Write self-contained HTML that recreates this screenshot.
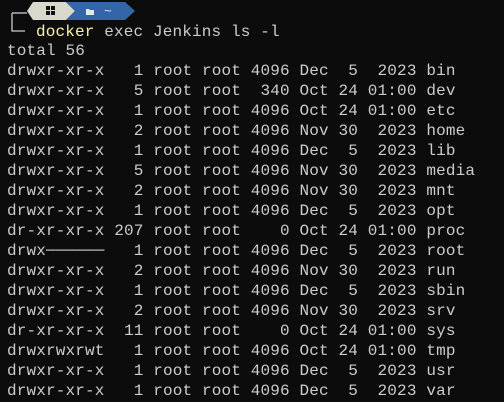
<html><head><style>
body{margin:0;width:504px;height:402px;background:#0c0c0c;overflow:hidden;font-family:"Liberation Mono",monospace;color:#cccccc}
pre{position:absolute;left:7px;top:41px;margin:0;font-size:16px;line-height:20px;font-family:"Liberation Mono",monospace;letter-spacing:0.15px}
.p{position:absolute;left:36px;top:23px;font-size:16px;letter-spacing:0.15px;white-space:pre}
</style></head><body>
<svg width="504" height="40" style="position:absolute;left:0;top:0">
<path d="M12 13 V31 H25" stroke="#cccccc" stroke-width="1.3" fill="none"/>
<path d="M12 13 H27" stroke="#cccccc" stroke-width="1.3"/>
<polygon points="27,11 33,2 66,2 75,11 66,20 33,20" fill="#d8d8cc"/>
<polygon points="66,2 125,2 135,11 125,20 66,20 75,11" fill="#3465a8"/>
<rect x="46" y="6" width="4" height="4" fill="#111"/><rect x="51" y="6" width="4" height="4" fill="#111"/>
<rect x="46" y="11" width="4" height="4" fill="#111"/><rect x="51" y="11" width="4" height="4" fill="#111"/>
<path d="M86 9 h3 l1 1 h4 v5 h-8z" fill="#e0e8f0"/>
<text x="104" y="15" fill="#e0e8f0" font-size="13" font-family="Liberation Mono">~</text>
</svg>
<div class="p"><span style="color:#f9f1a5">docker</span> exec Jenkins ls -l</div>
<pre>total 56
drwxr-xr-x   1 root root 4096 Dec  5  2023 bin
drwxr-xr-x   5 root root  340 Oct 24 01:00 dev
drwxr-xr-x   1 root root 4096 Oct 24 01:00 etc
drwxr-xr-x   2 root root 4096 Nov 30  2023 home
drwxr-xr-x   1 root root 4096 Dec  5  2023 lib
drwxr-xr-x   5 root root 4096 Nov 30  2023 media
drwxr-xr-x   2 root root 4096 Nov 30  2023 mnt
drwxr-xr-x   1 root root 4096 Dec  5  2023 opt
dr-xr-xr-x 207 root root    0 Oct 24 01:00 proc
drwx──────   1 root root 4096 Dec  5  2023 root
drwxr-xr-x   2 root root 4096 Nov 30  2023 run
drwxr-xr-x   1 root root 4096 Dec  5  2023 sbin
drwxr-xr-x   2 root root 4096 Nov 30  2023 srv
dr-xr-xr-x  11 root root    0 Oct 24 01:00 sys
drwxrwxrwt   1 root root 4096 Oct 24 01:00 tmp
drwxr-xr-x   1 root root 4096 Dec  5  2023 usr
drwxr-xr-x   1 root root 4096 Dec  5  2023 var</pre>
</body></html>
